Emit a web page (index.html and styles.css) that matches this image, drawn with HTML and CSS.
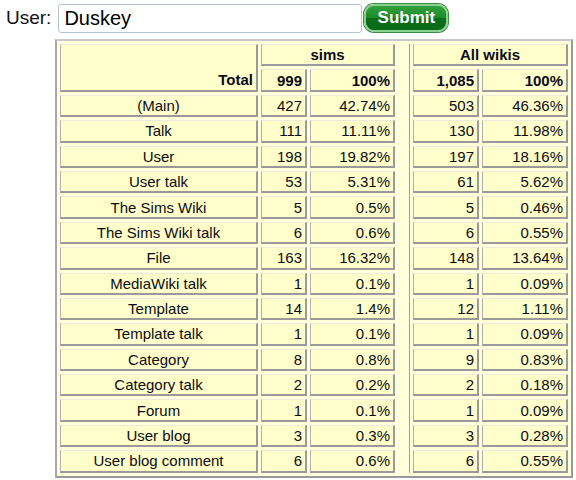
FILE: index.html
```html
<!DOCTYPE html>
<html>
<head>
<meta charset="utf-8">
<link rel="stylesheet" href="styles.css">
</head>
<body>
<form class="bar">
  <label class="lbl">User:</label>
  <input class="user" type="text" value="Duskey">
  <button class="submit" type="button">Submit</button>
</form>
<table class="stats">
  <colgroup>
    <col class="c-ns"><col class="c-n"><col class="c-p"><col class="c-gap"><col class="c-n2"><col class="c-p2">
  </colgroup>
  <tr>
    <th class="ns total" rowspan="2">Total</th>
    <th class="head" colspan="2">sims</th>
    <td class="gap" rowspan="17"></td>
    <th class="head" colspan="2">All wikis</th>
  </tr>
  <tr class="tot">
    <th class="num">999</th><th class="num">100%</th>
    <th class="num">1,085</th><th class="num">100%</th>
  </tr>
  <tr><td class="ns">(Main)</td><td class="num">427</td><td class="num">42.74%</td><td class="num">503</td><td class="num">46.36%</td></tr>
  <tr><td class="ns">Talk</td><td class="num">111</td><td class="num">11.11%</td><td class="num">130</td><td class="num">11.98%</td></tr>
  <tr><td class="ns">User</td><td class="num">198</td><td class="num">19.82%</td><td class="num">197</td><td class="num">18.16%</td></tr>
  <tr><td class="ns">User talk</td><td class="num">53</td><td class="num">5.31%</td><td class="num">61</td><td class="num">5.62%</td></tr>
  <tr><td class="ns">The Sims Wiki</td><td class="num">5</td><td class="num">0.5%</td><td class="num">5</td><td class="num">0.46%</td></tr>
  <tr><td class="ns">The Sims Wiki talk</td><td class="num">6</td><td class="num">0.6%</td><td class="num">6</td><td class="num">0.55%</td></tr>
  <tr><td class="ns">File</td><td class="num">163</td><td class="num">16.32%</td><td class="num">148</td><td class="num">13.64%</td></tr>
  <tr><td class="ns">MediaWiki talk</td><td class="num">1</td><td class="num">0.1%</td><td class="num">1</td><td class="num">0.09%</td></tr>
  <tr><td class="ns">Template</td><td class="num">14</td><td class="num">1.4%</td><td class="num">12</td><td class="num">1.11%</td></tr>
  <tr><td class="ns">Template talk</td><td class="num">1</td><td class="num">0.1%</td><td class="num">1</td><td class="num">0.09%</td></tr>
  <tr><td class="ns">Category</td><td class="num">8</td><td class="num">0.8%</td><td class="num">9</td><td class="num">0.83%</td></tr>
  <tr><td class="ns">Category talk</td><td class="num">2</td><td class="num">0.2%</td><td class="num">2</td><td class="num">0.18%</td></tr>
  <tr><td class="ns">Forum</td><td class="num">1</td><td class="num">0.1%</td><td class="num">1</td><td class="num">0.09%</td></tr>
  <tr><td class="ns">User blog</td><td class="num">3</td><td class="num">0.3%</td><td class="num">3</td><td class="num">0.28%</td></tr>
  <tr><td class="ns">User blog comment</td><td class="num">6</td><td class="num">0.6%</td><td class="num">6</td><td class="num">0.55%</td></tr>
</table>
</body>
</html>
```

FILE: styles.css
```css
html, body {
  margin: 0;
  padding: 0;
  background: #ffffff;
}
body {
  font-family: "Liberation Sans", Arial, sans-serif;
  color: #000;
}
.bar {
  display: flex;
  align-items: center;
  height: 36px;
  margin: 0;
  padding: 0 0 0 6px;
}
.lbl {
  font-size: 19px;
  color: #101020;
  margin-right: 7px;
}
.user {
  box-sizing: border-box;
  width: 304px;
  height: 29px;
  margin: 0;
  padding: 0 0 0 5px;
  border: 1px solid #b4c4d8;
  border-radius: 3px;
  font-family: "Liberation Sans", Arial, sans-serif;
  font-size: 20px;
  color: #000;
  background: #fff;
}
.submit {
  box-sizing: border-box;
  margin-left: 2px;
  width: 84px;
  height: 28px;
  padding: 0 0 1px 0;
  border: 2px solid #8bd08b;
  border-radius: 10px;
  background: linear-gradient(#32a03c 0%, #1b8a2a 50%, #0a6e1a 51%, #0a6a18 100%);
  box-shadow: 0 0 0 1px #3f8a45;
  color: #fff;
  font-family: "Liberation Sans", Arial, sans-serif;
  font-weight: bold;
  font-size: 17px;
}
.stats {
  margin: 3px 0 0 55px;
  border-collapse: separate;
  border-spacing: 3px;
  border: 2px solid;
  border-color: #c8c8c8 #999999 #999999 #a8a8a8;
  background: #ffffdc;
  table-layout: fixed;
  width: 518px;
  font-size: 15px;
}
.c-ns { width: 198px; }
.c-n { width: 46px; }
.c-p { width: 85px; }
.c-gap { width: 12px; }
.c-n2 { width: 66px; }
.c-p2 { width: 86px; }
.stats th, .stats td {
  box-sizing: border-box;
  height: 22.4px;
  padding: 0 3px;
  background: #ffffcc;
  border-style: solid;
  border-width: 1px 2px 2px 1px;
  border-color: #ececd8 #9a9a9a #9a9a9a #b0b0b0;
  white-space: nowrap;
  line-height: 17px;
  color: #0c0c14;
}
.stats th { font-weight: bold; }
.stats .ns { text-align: center; font-weight: normal; }
.stats .ns.total { text-align: right; vertical-align: bottom; font-weight: bold; padding-bottom: 2px; }
.stats .head { text-align: center; }
.stats .num { text-align: right; }
.stats td.gap {
  background: #ffffdc;
  border-width: 0 1px 0 0;
  border-color: #a0a0a0;
  padding: 0;
}
```
